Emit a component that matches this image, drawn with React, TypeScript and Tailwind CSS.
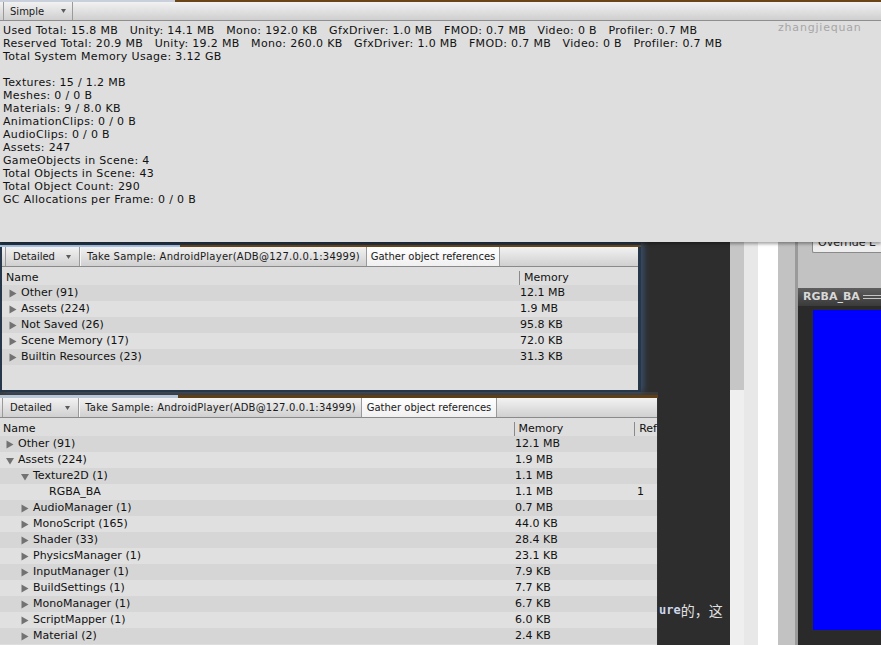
import React from "react";

type Row = {
  name: string;
  mem: string;
  depth: number;
  open?: boolean;
  leaf?: boolean;
  refs?: string;
};

const summary = [
  "Used Total: 15.8 MB   Unity: 14.1 MB   Mono: 192.0 KB   GfxDriver: 1.0 MB   FMOD: 0.7 MB   Video: 0 B   Profiler: 0.7 MB",
  "Reserved Total: 20.9 MB   Unity: 19.2 MB   Mono: 260.0 KB   GfxDriver: 1.0 MB   FMOD: 0.7 MB   Video: 0 B   Profiler: 0.7 MB",
  "Total System Memory Usage: 3.12 GB",
  " ",
  "Textures: 15 / 1.2 MB",
  "Meshes: 0 / 0 B",
  "Materials: 9 / 8.0 KB",
  "AnimationClips: 0 / 0 B",
  "AudioClips: 0 / 0 B",
  "Assets: 247",
  "GameObjects in Scene: 4",
  "Total Objects in Scene: 43",
  "Total Object Count: 290",
  "GC Allocations per Frame: 0 / 0 B",
];

const topRows: Row[] = [
  { name: "Other (91)", mem: "12.1 MB", depth: 0 },
  { name: "Assets (224)", mem: "1.9 MB", depth: 0 },
  { name: "Not Saved (26)", mem: "95.8 KB", depth: 0 },
  { name: "Scene Memory (17)", mem: "72.0 KB", depth: 0 },
  { name: "Builtin Resources (23)", mem: "31.3 KB", depth: 0 },
];

const bottomRows: Row[] = [
  { name: "Other (91)", mem: "12.1 MB", depth: 0 },
  { name: "Assets (224)", mem: "1.9 MB", depth: 0, open: true },
  { name: "Texture2D (1)", mem: "1.1 MB", depth: 1, open: true },
  { name: "RGBA_BA", mem: "1.1 MB", depth: 2, leaf: true, refs: "1" },
  { name: "AudioManager (1)", mem: "0.7 MB", depth: 1 },
  { name: "MonoScript (165)", mem: "44.0 KB", depth: 1 },
  { name: "Shader (33)", mem: "28.4 KB", depth: 1 },
  { name: "PhysicsManager (1)", mem: "23.1 KB", depth: 1 },
  { name: "InputManager (1)", mem: "7.9 KB", depth: 1 },
  { name: "BuildSettings (1)", mem: "7.7 KB", depth: 1 },
  { name: "MonoManager (1)", mem: "6.7 KB", depth: 1 },
  { name: "ScriptMapper (1)", mem: "6.0 KB", depth: 1 },
  { name: "Material (2)", mem: "2.4 KB", depth: 1 },
];

// indent per tree depth (lower window)
const indent = ["pl-[6px]", "pl-[21px]", "pl-[37px]"];

function DropArrow() {
  return (
    <svg width="5" height="4" viewBox="0 0 5 4" className="shrink-0">
      <path d="M0 0h5L2.5 4z" fill="#5a5a5a" />
    </svg>
  );
}

function Fold({ open }: { open?: boolean }) {
  return (
    <svg width="8" height="9" viewBox="0 0 8 9" className="mr-[4px] shrink-0">
      {open ? (
        <path d="M0 2h8L4 8.5z" fill="#727272" />
      ) : (
        <path d="M0.5 0.5L7.5 4.5L0.5 8.5z" fill="#727272" />
      )}
    </svg>
  );
}

function Toolbar({ low }: { low?: boolean }) {
  return (
    <div className="flex h-[20px] shrink-0 border-b border-[#8a8a8a] bg-linear-to-b from-[#f2f2f2] to-[#d0d0d0] text-[10px] text-[#1a1a1a]">
      <div
        className={
          low
            ? "ml-[2px] flex w-[77px] items-center justify-between border-x border-[#9a9a9a] pl-[7px] pr-[8px]"
            : "ml-[3px] flex w-[75px] items-center justify-between border-x border-[#9a9a9a] pl-[7px] pr-[8px]"
        }
      >
        Detailed
        <DropArrow />
      </div>
      <div
        className={
          low
            ? "flex w-[283px] items-center justify-center border-l border-r border-l-[#f6f6f6] border-r-[#9a9a9a] tracking-[0.2px]"
            : "flex w-[287px] items-center justify-center border-l border-r border-l-[#f6f6f6] border-r-[#9a9a9a] tracking-[0.25px]"
        }
      >
        Take Sample: AndroidPlayer(ADB@127.0.0.1:34999)
      </div>
      <div
        className={
          low
            ? "flex w-[135px] items-center justify-center border-r border-[#9a9a9a] bg-linear-to-b from-white to-[#f0f0f0]"
            : "flex w-[133px] items-center justify-center border-r border-[#9a9a9a] bg-linear-to-b from-white to-[#f0f0f0]"
        }
      >
        Gather object references
      </div>
    </div>
  );
}

function TopWindow() {
  return (
    <div className="absolute left-0 top-[242px] z-10 flex h-[150px] w-[641px] flex-col bg-[#26374a] shadow-[3px_0_6px_rgba(70,120,180,0.45)]">
      <div className="h-[3px] shrink-0" />
      <div className="flex h-[2px] shrink-0">
        <div className="w-[180px] bg-[#a8c2e2]" />
        <div className="flex-1 bg-[#6a4819]" />
      </div>
      <div className="ml-[2px] mr-[3px] mb-[2px] flex flex-1 flex-col bg-[#dedede] text-[11px] text-[#111]">
        <Toolbar />
        <div className="flex h-[18px] shrink-0 items-center pt-[4px]">
          <div className="w-[517px] pl-[4px]">Name</div>
          <div className="h-[14px] border-l border-[#8a8a8a] pl-[4px] leading-[14px]">Memory</div>
        </div>
        {topRows.map((r, i) => (
          <div
            key={r.name}
            className={
              i % 2 === 0
                ? "flex h-[16px] shrink-0 items-center bg-[#d6d6d6]"
                : "flex h-[16px] shrink-0 items-center bg-[#e0e0e0]"
            }
          >
            <div className="flex w-[517px] items-center pl-[7px]">
              <Fold />
              {r.name}
            </div>
            <div className="pl-[1px]">{r.mem}</div>
          </div>
        ))}
      </div>
    </div>
  );
}

function BottomWindow() {
  return (
    <div className="absolute left-0 top-[395px] z-20 flex h-[250px] w-[658px] flex-col overflow-hidden bg-[#333]">
      <div className="flex h-[3px] shrink-0">
        <div className="w-[178px] bg-[#b9c6d6]" />
        <div className="flex-1 bg-[#5f4016]" />
      </div>
      <div className="mr-[1px] flex flex-1 flex-col bg-[#dedede] text-[11px] text-[#111]">
        <Toolbar low />
        <div className="flex h-[18px] shrink-0 items-center pt-[4px]">
          <div className="w-[515px] pl-[3px]">Name</div>
          <div className="h-[14px] w-[121px] border-l border-[#8a8a8a] pl-[4px] leading-[14px]">
            Memory
          </div>
          <div className="h-[14px] border-l border-[#8a8a8a] pl-[4px] leading-[14px]">Ref</div>
        </div>
        {bottomRows.map((r, i) => (
          <div
            key={r.name}
            className={
              i % 2 === 0
                ? "flex h-[16px] shrink-0 items-center bg-[#d6d6d6]"
                : "flex h-[16px] shrink-0 items-center bg-[#e0e0e0]"
            }
          >
            <div className={"flex w-[515px] items-center " + indent[r.depth]}>
              {r.leaf ? <span className="w-[12px] shrink-0" /> : <Fold open={r.open} />}
              {r.name}
            </div>
            <div className="w-[121px]">{r.mem}</div>
            <div className="pl-[1px]">{r.refs}</div>
          </div>
        ))}
      </div>
    </div>
  );
}

function Inspector() {
  return (
    <div className="flex w-[83px] shrink-0 flex-col">
      <div className="h-[288px] shrink-0 bg-[#c2c2c2] pl-[14px] pt-[233px]">
        <div className="h-[20px] overflow-hidden whitespace-nowrap rounded-l-[2px] border border-r-0 border-[#8a8a8a] bg-[#ededed] pl-[5px] text-[11px] leading-[18px] text-[#222]">
          Override E
        </div>
      </div>
      <div className="flex h-[18px] shrink-0 items-center bg-linear-to-b from-[#5e5e5e] to-[#3a3a3a] pl-[5px] text-[11px] font-bold text-[#d8d8d8]">
        RGBA_BA
        <span className="ml-[3px] h-[4px] flex-1 border-y border-[#c4c4c4]" />
      </div>
      <div className="flex-1 bg-[#2a2a2a] pl-[15px] pt-[4px]">
        <div className="h-[320px] bg-[#0000ff]" />
      </div>
    </div>
  );
}

export default function App() {
  return (
    <div className="relative flex h-[645px] w-[881px] overflow-hidden bg-[#2d2d2d] font-['DejaVu_Sans',sans-serif]">
      {/* desktop behind the profiler windows */}
      <div className="relative h-full w-[730px] shrink-0 bg-[#2d2d2d]">
        <TopWindow />
        <div className="absolute left-0 top-[392px] h-[3px] w-[658px] bg-[#3a3a3a]" />
        <BottomWindow />
        <div className="absolute left-[659px] top-[601px] flex items-center whitespace-nowrap text-[#e2e2e2]">
          <span className="font-['DejaVu_Sans_Mono',monospace] text-[12px] font-bold text-[#cdd6ea]">ure</span>
          <span className="font-['Noto_Sans_CJK_SC',sans-serif] text-[14px] leading-[18px]">的，这</span>
        </div>
      </div>
      <div className="flex w-[14px] shrink-0 flex-col">
        <div className="h-[390px] bg-[#c6c6c6]" />
        <div className="flex-1 bg-[#efefef]" />
      </div>
      <div className="w-[14px] shrink-0 bg-[#e8e8e8]" />
      <div className="w-[20px] shrink-0 bg-white" />
      <div className="w-[17px] shrink-0 bg-[#c2c2c2]" />
      <div className="w-[3px] shrink-0 bg-[#9a9a9a]" />
      <Inspector />

      {/* simple memory view on top */}
      <div className="absolute left-0 top-0 z-30 h-[242px] w-[881px] bg-[#dedede] shadow-[0_2px_3px_rgba(0,0,0,0.35)]">
        <div className="flex h-[2px]">
          <div className="w-[175px] bg-[#c9d0dc]" />
          <div className="flex-1 bg-[#6a4616]" />
        </div>
        <div className="flex h-[19px] border-b border-[#8e8e8e] bg-linear-to-b from-[#f2f2f2] to-[#cfcfcf] text-[10px] text-[#1a1a1a]">
          <div className="ml-[3px] flex w-[70px] items-center justify-between border-x border-[#9a9a9a] pl-[6px] pr-[6px]">
            Simple
            <DropArrow />
          </div>
        </div>
        <div className="whitespace-pre pl-[3px] pt-[3px] text-[11px] leading-[13px] tracking-[0.33px] text-[#111]">
          {summary.map((line, i) => (
            <div key={i}>{line}</div>
          ))}
        </div>
        <div className="absolute left-[778px] top-[20px] text-[11px] tracking-[0.8px] text-[#a6a6a6]">
          zhangjiequan
        </div>
      </div>
    </div>
  );
}
